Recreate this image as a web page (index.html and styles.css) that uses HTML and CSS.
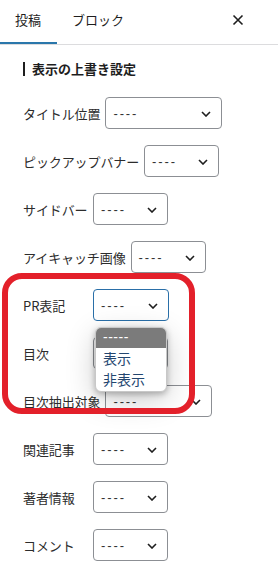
FILE: index.html
```html
<!DOCTYPE html>
<html lang="ja">
<head>
<meta charset="utf-8">
<link rel="stylesheet" href="styles.css">
</head>
<body>
<div class="panel">
  <div class="tabs">
    <div class="tab active">投稿</div>
    <div class="tab">ブロック</div>
    <div class="close">
      <svg width="12" height="12" viewBox="0 0 12 12"><path d="M1.5 1.5 L10.5 10.5 M10.5 1.5 L1.5 10.5" stroke="#1e1e1e" stroke-width="1.6" fill="none"/></svg>
    </div>
  </div>
  <div class="section">
    <h2 class="heading">表示の上書き設定</h2>
    <div class="row"><span class="label">タイトル位置</span><div class="select w117"><span class="val">----</span><svg class="chev" width="10" height="6" viewBox="0 0 10 6"><path d="M1 1 L5 5 L9 1" stroke="#1e1e1e" stroke-width="1.6" fill="none"/></svg></div></div>
    <div class="row"><span class="label">ピックアップバナー</span><div class="select"><span class="val">----</span><svg class="chev" width="10" height="6" viewBox="0 0 10 6"><path d="M1 1 L5 5 L9 1" stroke="#1e1e1e" stroke-width="1.6" fill="none"/></svg></div></div>
    <div class="row"><span class="label">サイドバー</span><div class="select"><span class="val">----</span><svg class="chev" width="10" height="6" viewBox="0 0 10 6"><path d="M1 1 L5 5 L9 1" stroke="#1e1e1e" stroke-width="1.6" fill="none"/></svg></div></div>
    <div class="row"><span class="label">アイキャッチ画像</span><div class="select"><span class="val">----</span><svg class="chev" width="10" height="6" viewBox="0 0 10 6"><path d="M1 1 L5 5 L9 1" stroke="#1e1e1e" stroke-width="1.6" fill="none"/></svg></div></div>
    <div class="row"><span class="label">PR表記</span><div class="select focus w76"><span class="val">----</span><svg class="chev" width="10" height="6" viewBox="0 0 10 6"><path d="M1 1 L5 5 L9 1" stroke="#1e1e1e" stroke-width="1.6" fill="none"/></svg>
      <ul class="popup">
        <li class="sel">-----</li>
        <li>表示</li>
        <li>非表示</li>
      </ul>
    </div></div>
    <div class="row"><span class="label">目次</span><div class="select"></div></div>
    <div class="row"><span class="label">目次抽出対象</span><div class="select w107"><span class="val">----</span><svg class="chev" width="10" height="6" viewBox="0 0 10 6"><path d="M1 1 L5 5 L9 1" stroke="#1e1e1e" stroke-width="1.6" fill="none"/></svg></div></div>
    <div class="row"><span class="label">関連記事</span><div class="select"><span class="val">----</span><svg class="chev" width="10" height="6" viewBox="0 0 10 6"><path d="M1 1 L5 5 L9 1" stroke="#1e1e1e" stroke-width="1.6" fill="none"/></svg></div></div>
    <div class="row"><span class="label">著者情報</span><div class="select"><span class="val">----</span><svg class="chev" width="10" height="6" viewBox="0 0 10 6"><path d="M1 1 L5 5 L9 1" stroke="#1e1e1e" stroke-width="1.6" fill="none"/></svg></div></div>
    <div class="row"><span class="label">コメント</span><div class="select"><span class="val">----</span><svg class="chev" width="10" height="6" viewBox="0 0 10 6"><path d="M1 1 L5 5 L9 1" stroke="#1e1e1e" stroke-width="1.6" fill="none"/></svg></div></div>
  </div>
  <div class="highlight"></div>
</div>
</body>
</html>
```

FILE: styles.css
```css
* { box-sizing: border-box; }
html, body { margin: 0; padding: 0; background: #fff; }
body {
  font-family: "Noto Sans CJK JP", "Noto Sans", sans-serif;
  font-size: 13px;
  color: #1e1e1e;
  width: 278px;
  height: 567px;
  overflow: hidden;
}
.panel { position: relative; height: 567px; }
.tabs {
  display: flex;
  align-items: stretch;
  height: 45px;
  border-bottom: 1px solid #dcdcde;
}
.tab {
  padding: 0 16px 0 15px;
  line-height: 40px;
  height: 44px;
  font-size: 13px;
  color: #1e1e1e;
}
.tab.active { box-shadow: inset 0 -2px 0 #2a77ab; width: 57px; }
.close {
  margin-left: auto;
  width: 46px;
  display: flex;
  align-items: center;
  padding-left: 0;
  padding-bottom: 4px;
}
.section { padding: 17px 0 0 23px; }
.heading {
  margin: 0 0 21px 0;
  font-size: 13px;
  font-weight: 700;
  line-height: 14px;
  height: 14px;
  border-left: 2px solid #1e1e1e;
  padding-left: 7px;
  color: #1e1e1e;
}
.row {
  display: flex;
  align-items: center;
  height: 32px;
  margin-bottom: 16px;
}
.label {
  min-width: 65px;
  margin-right: 5px;
  white-space: nowrap;
  color: #2c2c2c;
  letter-spacing: -0.1px;
}
.select {
  position: relative;
  width: 75px;
  height: 32px;
  border: 1px solid #8c8f94;
  border-radius: 4px;
  display: flex;
  align-items: center;
  padding-left: 7px;
  background: #fff;
}
.select.w117 { width: 117px; }
.select.w107 { width: 107px; }
.select.w76 { width: 76px; }
.select.focus { border: 1.5px solid #2a6fa8; }
.val {
  font-family: "Liberation Sans", sans-serif;
  font-size: 13px;
  letter-spacing: 1.9px;
  color: #333;
  line-height: 1;
}
.chev { position: absolute; right: 10px; top: 13px; }
.popup {
  position: absolute;
  left: 1px;
  top: 37px;
  width: 72px;
  height: 65px;
  margin: 0;
  padding: 0;
  list-style: none;
  background: #fff;
  border: 1px solid #c8c8c8;
  border-radius: 6px;
  overflow: hidden;
  box-shadow: 0 2px 6px rgba(0,0,0,0.28), 0 8px 30px rgba(0,0,0,0.2);
  z-index: 2;
}
.popup li {
  height: 21px;
  line-height: 21px;
  padding-left: 7px;
  font-size: 14px;
  color: #23466f;
}
.popup li.sel {
  background: #7b7b7b;
  color: #fff;
  height: 20px;
  line-height: 18px;
  font-family: "Liberation Sans", sans-serif;
  letter-spacing: 0.5px;
}
.highlight {
  position: absolute;
  left: 2px;
  top: 273px;
  width: 193px;
  height: 141px;
  border: 6px solid #e3202a;
  border-radius: 20px;
  z-index: 3;
  pointer-events: none;
}
```
